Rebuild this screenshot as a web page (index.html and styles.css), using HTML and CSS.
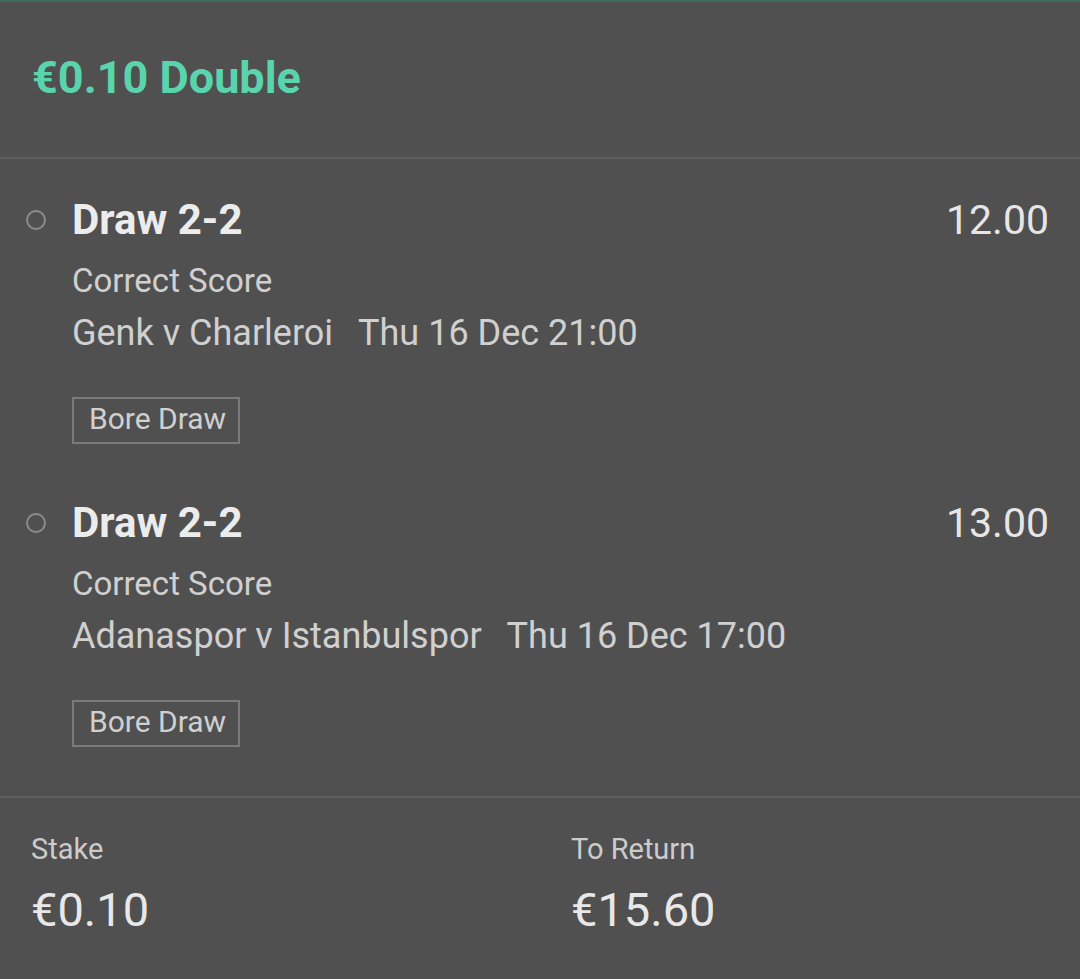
FILE: index.html
```html
<!DOCTYPE html>
<html lang="en">
<head>
    <meta charset="UTF-8">
    <meta name="viewport" content="width=device-width, initial-scale=1.0">
    <title>Bet Receipt</title>
    <link rel="stylesheet" href="styles.css">
</head>
<body>
    <div class="bet">
        <header class="bet-header">
            <h1 class="bet-title">€0.10 Double</h1>
        </header>

        <section class="selections">
            <div class="selection">
                <span class="selection-dot"></span>
                <div class="selection-body">
                    <div class="selection-top">
                        <h2 class="selection-name">Draw 2-2</h2>
                        <span class="selection-odds">12.00</span>
                    </div>
                    <p class="selection-market">Correct Score</p>
                    <p class="selection-event">Genk v Charleroi<span class="selection-time">Thu 16 Dec 21:00</span></p>
                    <span class="selection-tag">Bore Draw</span>
                </div>
            </div>

            <div class="selection">
                <span class="selection-dot"></span>
                <div class="selection-body">
                    <div class="selection-top">
                        <h2 class="selection-name">Draw 2-2</h2>
                        <span class="selection-odds">13.00</span>
                    </div>
                    <p class="selection-market">Correct Score</p>
                    <p class="selection-event">Adanaspor v Istanbulspor<span class="selection-time">Thu 16 Dec 17:00</span></p>
                    <span class="selection-tag">Bore Draw</span>
                </div>
            </div>
        </section>

        <footer class="bet-footer">
            <div class="bet-figure">
                <span class="figure-label">Stake</span>
                <span class="figure-value">€0.10</span>
            </div>
            <div class="bet-figure">
                <span class="figure-label">To Return</span>
                <span class="figure-value">€15.60</span>
            </div>
        </footer>
    </div>
</body>
</html>
```

FILE: styles.css
```css
/* Page */
body {
    margin: 0;
    background-color: #505050;
    font-family: Roboto, "Liberation Sans", sans-serif;
    color: #e6e6e6;
}

.bet {
    border-top: 2px solid #3e6e5b;
    min-height: 977px;
}

/* Header */
.bet-header {
    padding: 50px 32px 53px;
    border-bottom: 2px solid #5f5f5f;
}

.bet-title {
    margin: 0;
    font-size: 45px;
    line-height: 52px;
    font-weight: 700;
    color: #5ad4ad;
}

/* Selections */
.selections {
    padding: 37px 31px 49px 26px;
}

.selection {
    display: flex;
    gap: 26px;
}

.selection + .selection {
    margin-top: 55px;
}

.selection-dot {
    flex: none;
    width: 16px;
    height: 16px;
    margin-top: 14px;
    border: 2px solid #8c8c8c;
    border-radius: 50%;
}

.selection-body {
    flex: 1;
}

.selection-top {
    display: flex;
    justify-content: space-between;
    align-items: baseline;
}

.selection-name {
    margin: 0;
    font-size: 42px;
    line-height: 48px;
    font-weight: 700;
    color: #ececec;
}

.selection-odds {
    font-size: 41px;
    line-height: 48px;
    color: #e6e6e6;
}

.selection-market {
    margin: 17px 0 0;
    font-size: 33px;
    line-height: 40px;
    color: #d0d0d0;
}

.selection-event {
    margin: 12px 0 0;
    font-size: 36px;
    line-height: 40px;
    color: #d0d0d0;
}

.selection-time {
    margin-left: 25px;
}

.selection-tag {
    display: inline-block;
    margin-top: 44px;
    padding: 0 12px 4px 15px;
    border: 2px solid #7a7a7a;
    font-size: 30px;
    line-height: 39px;
    color: #d0d0d0;
}

/* Footer */
.bet-footer {
    display: grid;
    grid-template-columns: 540px 1fr;
    padding: 34px 31px 0;
    border-top: 2px solid #5f5f5f;
}

.bet-figure {
    display: flex;
    flex-direction: column;
}

.figure-label {
    font-size: 29px;
    line-height: 34px;
    color: #cccccc;
}

.figure-value {
    margin-top: 17px;
    font-size: 47px;
    line-height: 54px;
    color: #e8e8e8;
}
```
